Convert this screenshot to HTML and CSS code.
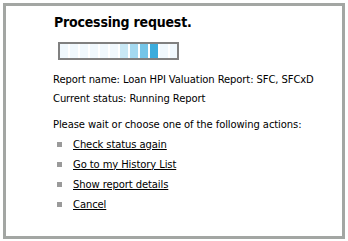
FILE: index.html
```html
<!DOCTYPE html>
<html>
<head>
<meta charset="utf-8">
<link rel="stylesheet" href="styles.css">
</head>
<body>
<div class="frame">
  <div class="content">
    <h1 class="title">Processing request.</h1>
    <div class="progress">
      <span class="cell"></span><span class="cell"></span><span class="cell"></span><span class="cell"></span><span class="cell"></span><span class="cell"></span><span class="cell c1"></span><span class="cell c2"></span><span class="cell c3"></span><span class="cell c4"></span><span class="cell"></span><span class="cell"></span>
    </div>
    <p class="line first">Report name: Loan HPI Valuation Report: SFC, SFCxD</p>
    <p class="line">Current status: Running Report</p>
    <p class="line gap">Please wait or choose one of the following actions:</p>
    <ul class="actions">
      <li><span class="bullet"></span><a href="#">Check status again</a></li>
      <li><span class="bullet"></span><a href="#">Go to my History List</a></li>
      <li><span class="bullet"></span><a href="#">Show report details</a></li>
      <li><span class="bullet"></span><a href="#">Cancel</a></li>
    </ul>
  </div>
</div>
</body>
</html>
```
FILE: styles.css
```css
html, body {
  margin: 0;
  padding: 0;
  background: #ffffff;
}
body {
  font-family: "DejaVu Sans", Verdana, sans-serif;
  font-size: 10px;
  color: #000000;
}
.frame {
  margin: 3px 0 0 3px;
  width: 336px;
  height: 230px;
  border: 3px solid #a3a6a3;
  background: #ffffff;
}
.content {
  padding: 6px 0 0 47px;
}
.title {
  margin: 0 0 0 1px;
  font-family: "DejaVu Sans Condensed", "Liberation Sans", sans-serif;
  font-size: 14px;
  line-height: 20px;
  font-weight: bold;
  letter-spacing: -0.2px;
}
.progress {
  margin: 10px 0 0 5px;
  width: 117px;
  height: 14px;
  border: 2px solid #808080;
  display: flex;
  gap: 2px;
  overflow: hidden;
}
.cell {
  flex: 0 0 8px;
  height: 14px;
  background: #f0f8fd;
}
.c1 { background: #c8e8f5; }
.c2 { background: #a4d9f0; }
.c3 { background: #74c5e8; }
.c4 { background: #3cacdc; }
.line {
  margin: 0;
  line-height: 19px;
  letter-spacing: -0.1px;
}
.first {
  margin-top: 10px;
}
.gap {
  margin-top: 7px;
}
.actions {
  list-style: none;
  margin: 0;
  padding: 0;
}
.actions li {
  display: flex;
  align-items: center;
  height: 20px;
  letter-spacing: -0.1px;
}
.bullet {
  width: 5px;
  height: 5px;
  background: #9a9a9a;
  margin: 0 11px 0 4px;
}
.actions a {
  color: #000000;
  text-decoration: underline;
}
```
